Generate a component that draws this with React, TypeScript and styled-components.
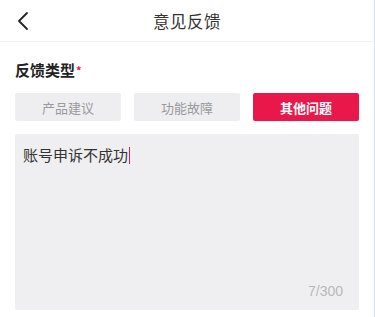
import React, { useState } from 'react';
import styled, { createGlobalStyle } from 'styled-components';

const GlobalStyle = createGlobalStyle`
  html, body {
    margin: 0;
    padding: 0;
    background: #ffffff;
  }
  body {
    font-family: "Noto Sans CJK SC", "Noto Sans", sans-serif;
  }
`;

const Page = styled.div`
  width: 375px;
  height: 317px;
  box-sizing: border-box;
  border-right: 1px solid #cfe6f2;
  background: #ffffff;
  overflow: hidden;
`;

const Header = styled.div`
  height: 41px;
  border-bottom: 1px solid #f0f0f2;
  display: flex;
  align-items: center;
  justify-content: center;
  position: relative;
`;

const BackButton = styled.button`
  position: absolute;
  left: 12px;
  top: 10px;
  width: 22px;
  height: 22px;
  padding: 0;
  border: none;
  background: none;
  display: flex;
  align-items: center;
  justify-content: center;
`;

const Title = styled.h1`
  margin: 0;
  font-size: 16.5px;
  font-weight: 400;
  color: #333;
  letter-spacing: 0.5px;
`;

const Content = styled.div`
  padding: 17px 15px 0 15px;
  display: flex;
  flex-direction: column;
`;

const Label = styled.div`
  font-size: 15px;
  font-weight: 700;
  color: #222;
  line-height: 22px;
`;

const Star = styled.span`
  color: #e8194a;
  font-size: 11px;
  vertical-align: top;
  margin-left: 1px;
`;

const TypeRow = styled.div`
  display: grid;
  grid-template-columns: repeat(3, 106px);
  column-gap: 13px;
  margin-top: 12px;
`;

const TypeButton = styled.button<{ $active: boolean }>`
  height: 28px;
  border: none;
  border-radius: 2px;
  padding: 0;
  font-family: inherit;
  font-size: 13px;
  font-weight: ${p => (p.$active ? 700 : 400)};
  background: ${p => (p.$active ? '#e8194a' : '#eeeef0')};
  color: ${p => (p.$active ? '#ffffff' : '#9a9a9e')};
`;

const InputBox = styled.div`
  margin-top: 13px;
  height: 176px;
  background: #efeff1;
  border-radius: 2px;
  box-sizing: border-box;
  padding: 10px 8px;
  display: flex;
  flex-direction: column;
  justify-content: space-between;
`;

const InputText = styled.div`
  font-size: 15px;
  color: #333;
  line-height: 22px;
  display: flex;
  align-items: center;
`;

const Caret = styled.span`
  display: inline-block;
  width: 1px;
  height: 17px;
  background: #e8194a;
  margin-left: 1px;
`;

const Counter = styled.div`
  align-self: flex-end;
  font-size: 14px;
  color: #b8b8bc;
  margin-right: 8px;
  margin-bottom: 1px;
  font-family: "Liberation Sans", Arial, sans-serif;
`;

const types = ['产品建议', '功能故障', '其他问题'];

const App: React.FC = () => {
  const [active, setActive] = useState(2);
  const text = '账号申诉不成功';

  return (
    <>
      <GlobalStyle />
      <Page>
        <Header>
          <BackButton aria-label="back">
            <svg width="14" height="20" viewBox="0 0 14 20">
              <path d="M11 2 L3 10 L11 18" fill="none" stroke="#222" strokeWidth="1.8" strokeLinecap="round" strokeLinejoin="round" />
            </svg>
          </BackButton>
          <Title>意见反馈</Title>
        </Header>
        <Content>
          <Label>
            反馈类型<Star>*</Star>
          </Label>
          <TypeRow>
            {types.map((t, i) => (
              <TypeButton key={t} $active={i === active} onClick={() => setActive(i)}>
                {t}
              </TypeButton>
            ))}
          </TypeRow>
          <InputBox>
            <InputText>
              {text}
              <Caret />
            </InputText>
            <Counter>{text.length}/300</Counter>
          </InputBox>
        </Content>
      </Page>
    </>
  );
};

export default App;
